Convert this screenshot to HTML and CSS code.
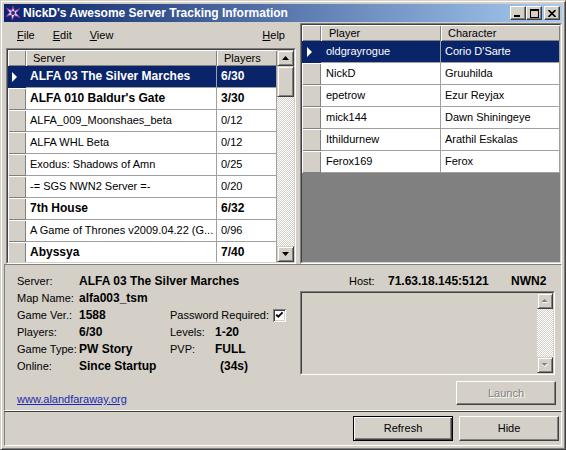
FILE: index.html
```html
<!DOCTYPE html>
<html>
<head>
<meta charset="utf-8">
<title>NickD's Awesome Server Tracking Information</title>
<link rel="stylesheet" href="styles.css">
</head>
<body>
<div class="window">
  <div class="titlebar">
    <svg class="appicon" viewBox="0 0 16 16" width="16" height="16">
      <polygon points="8,1 9.6,5.8 14.8,3.6 11,8 15,12.6 9.4,10.6 7.2,15.2 6.2,10.2 1.2,11.4 4.6,7.6 1.4,3 6.6,5.4" fill="#d8d4ec" stroke="#8a2a9a" stroke-width="1"/>
      <circle cx="8" cy="8" r="2" fill="#3a2a7a"/>
    </svg>
    <span class="title">NickD's Awesome Server Tracking Information</span>
    <div class="capbtns">
      <div class="cap"><svg width="8" height="7" viewBox="0 0 8 7"><rect x="0" y="5" width="6" height="2" fill="#000"/></svg></div>
      <div class="cap"><svg width="9" height="9" viewBox="0 0 9 9"><path d="M0 0H9V9H0Z M1 2V8H8V2Z" fill="#000" fill-rule="evenodd"/></svg></div>
      <div class="cap close"><svg width="8" height="7" viewBox="0 0 8 7"><path d="M0.5 0L7.5 7M7.5 0L0.5 7" stroke="#000" stroke-width="1.6"/></svg></div>
    </div>
  </div>

  <div class="main">
    <div class="leftpane">
      <div class="menubar">
        <span class="menu"><u>F</u>ile</span>
        <span class="menu"><u>E</u>dit</span>
        <span class="menu"><u>V</u>iew</span>
        <span class="menu help"><u>H</u>elp</span>
      </div>
      <div class="sunken lgrid">
        <div class="sunken-in gridbody">
          <div class="rows">
            <div class="row hrow">
              <div class="rh"></div>
              <div class="hcell w-server">Server</div>
              <div class="hcell w-players">Players</div>
            </div>
            <div class="row sel bold">
              <div class="rh"><span class="tri"></span></div>
              <div class="cell w-server">ALFA 03 The Silver Marches</div>
              <div class="cell w-players">6/30</div>
            </div>
            <div class="row bold">
              <div class="rh"></div>
              <div class="cell w-server">ALFA 010 Baldur's Gate</div>
              <div class="cell w-players">3/30</div>
            </div>
            <div class="row">
              <div class="rh"></div>
              <div class="cell w-server">ALFA_009_Moonshaes_beta</div>
              <div class="cell w-players">0/12</div>
            </div>
            <div class="row">
              <div class="rh"></div>
              <div class="cell w-server">ALFA WHL Beta</div>
              <div class="cell w-players">0/12</div>
            </div>
            <div class="row">
              <div class="rh"></div>
              <div class="cell w-server">Exodus: Shadows of Amn</div>
              <div class="cell w-players">0/25</div>
            </div>
            <div class="row">
              <div class="rh"></div>
              <div class="cell w-server">-= SGS NWN2 Server =-</div>
              <div class="cell w-players">0/20</div>
            </div>
            <div class="row bold">
              <div class="rh"></div>
              <div class="cell w-server">7th House</div>
              <div class="cell w-players">6/32</div>
            </div>
            <div class="row">
              <div class="rh"></div>
              <div class="cell w-server">A Game of Thrones v2009.04.22 (G...</div>
              <div class="cell w-players">0/96</div>
            </div>
            <div class="row bold">
              <div class="rh"></div>
              <div class="cell w-server">Abyssya</div>
              <div class="cell w-players">7/40</div>
            </div>
          </div>
          <div class="vscroll">
            <div class="sbtn"><svg width="7" height="4" viewBox="0 0 7 4"><path d="M3.5 0L7 4H0Z" fill="#000"/></svg></div>
            <div class="sthumb"></div>
            <div class="strack"></div>
            <div class="sbtn"><svg width="7" height="4" viewBox="0 0 7 4"><path d="M0 0H7L3.5 4Z" fill="#000"/></svg></div>
          </div>
        </div>
      </div>
    </div>

    <div class="rightpane">
      <div class="sunken rgrid">
        <div class="sunken-in rgridbody">
          <div class="row hrow">
            <div class="rh rh-r"></div>
            <div class="hcell w-player">Player</div>
            <div class="hcell w-char">Character</div>
          </div>
          <div class="row sel">
            <div class="rh rh-r"><span class="tri"></span></div>
            <div class="cell w-player">oldgrayrogue</div>
            <div class="cell w-char">Corio D'Sarte</div>
          </div>
          <div class="row">
            <div class="rh rh-r"></div>
            <div class="cell w-player">NickD</div>
            <div class="cell w-char">Gruuhilda</div>
          </div>
          <div class="row">
            <div class="rh rh-r"></div>
            <div class="cell w-player">epetrow</div>
            <div class="cell w-char">Ezur Reyjax</div>
          </div>
          <div class="row">
            <div class="rh rh-r"></div>
            <div class="cell w-player">mick144</div>
            <div class="cell w-char">Dawn Shiningeye</div>
          </div>
          <div class="row">
            <div class="rh rh-r"></div>
            <div class="cell w-player">Ithildurnew</div>
            <div class="cell w-char">Arathil Eskalas</div>
          </div>
          <div class="row">
            <div class="rh rh-r"></div>
            <div class="cell w-player">Ferox169</div>
            <div class="cell w-char">Ferox</div>
          </div>
        </div>
      </div>
    </div>
  </div>

  <div class="info">
    <div class="info-left">
      <div class="fields">
        <span>Server:</span><b class="span3">ALFA 03 The Silver Marches</b>
        <span>Map Name:</span><b class="span3">alfa003_tsm</b>
        <span>Game Ver.:</span><b>1588</b>
        <span class="pw span2"><span class="pwlabel">Password Required:</span>
          <svg class="check" width="13" height="13" viewBox="0 0 13 13">
            <rect width="13" height="13" fill="#fff"/>
            <path d="M0 0H13V1H1V13H0Z" fill="#808080"/>
            <path d="M1 1H12V2H2V12H1Z" fill="#404040"/>
            <path d="M11 2H12V12H2V11H11Z" fill="#d4d0c8"/>
            <rect x="2" y="2" width="9" height="9" fill="#fff"/>
            <path d="M3.2 5.6L5.3 7.7L9.6 3.4" stroke="#000" stroke-width="1.8" fill="none"/>
          </svg>
        </span>
        <span>Players:</span><b>6/30</b><span>Levels:</span><b>1-20</b>
        <span>Game Type:</span><b>PW Story</b><span>PVP:</span><b>FULL</b>
        <span>Online:</span><b>Since Startup</b><span></span><b class="secs">(34s)</b>
      </div>
      <a class="link" href="#">www.alandfaraway.org</a>
    </div>
    <div class="info-right">
      <div class="hostrow">
        <span class="hostlabel">Host:</span>
        <b class="hostval">71.63.18.145:5121</b>
        <b>NWN2</b>
      </div>
      <div class="tbox">
        <div class="tbox-in">
          <div class="vscroll small">
            <div class="sbtn"><svg width="8" height="5" viewBox="0 0 8 5"><path d="M4 1L7 4H1Z" fill="#fff"/><path d="M3.5 0L6.5 3H0.5Z" fill="#808080"/></svg></div>
            <div class="strack"></div>
            <div class="sbtn"><svg width="8" height="5" viewBox="0 0 8 5"><path d="M1 1H7L4 4Z" fill="#fff"/><path d="M0.5 0H6.5L3.5 3Z" fill="#808080"/></svg></div>
          </div>
        </div>
      </div>
      <div class="btn launch disabled">Launch</div>
    </div>
  </div>

  <div class="buttonbar">
    <div class="btn default">Refresh</div>
    <div class="btn">Hide</div>
  </div>
</div>
</body>
</html>
```

FILE: styles.css
```css
* { box-sizing: border-box; }
html, body { margin: 0; padding: 0; }
body {
  width: 566px;
  height: 450px;
  overflow: hidden;
  background: #d4d0c8;
  font-family: "Liberation Sans", Arial, sans-serif;
  font-size: 11px;
  line-height: 13px;
  color: #000;
}
b { font-weight: bold; font-size: 12px; }

.window {
  width: 566px;
  height: 450px;
  border: 1px solid;
  border-color: #d4d0c8 #404040 #404040 #d4d0c8;
  box-shadow: inset 1px 1px #fff, inset -1px -1px #808080;
  padding: 3px;
  display: flex;
  flex-direction: column;
  background: #d4d0c8;
}

/* title bar */
.titlebar {
  height: 18px;
  flex: none;
  display: flex;
  align-items: center;
  padding: 0 2px 0 1px;
  background: linear-gradient(to right, #0a246a, #a6caf0);
}
.appicon { flex: none; display: block; }
.title {
  flex: 1;
  margin-left: 2px;
  color: #fff;
  font-weight: bold;
  font-size: 12px;
  white-space: nowrap;
}
.capbtns { display: flex; }
.cap {
  width: 16px;
  height: 14px;
  background: #d4d0c8;
  border: 1px solid;
  border-color: #fff #404040 #404040 #fff;
  box-shadow: inset -1px -1px #808080;
  display: flex;
  align-items: center;
  justify-content: center;
}
.cap svg { display: block; }
.cap.close { margin-left: 2px; }

/* main area */
.main {
  margin-top: 1px;
  height: 241px;
  flex: none;
  display: flex;
}
.leftpane {
  width: 296px;
  display: flex;
  flex-direction: column;
}
.menubar {
  height: 25px;
  display: flex;
  align-items: center;
  padding: 0 6px 0 4px;
}
.menu { padding: 0 9px; }
.menu.help { margin-left: auto; }

.sunken {
  border: 1px solid;
  border-color: #808080 #fff #fff #808080;
}
.sunken-in {
  height: 100%;
  border: 1px solid;
  border-color: #404040 #d4d0c8 #d4d0c8 #404040;
}
.lgrid {
  margin: 0 4px 0 2px;
  height: 216px;
}
.gridbody {
  display: flex;
  background: #808080;
  overflow: hidden;
}
.rows {
  flex: 1;
  overflow: hidden;
}
.row {
  display: flex;
  height: 22px;
}
.row.hrow { height: 16px; }
.rh {
  width: 18px;
  flex: none;
  background: #d4d0c8;
  box-shadow: inset 1px 1px #fff, inset -1px -1px #808080;
  display: flex;
  align-items: center;
  padding-left: 4px;
}
.rh-r { width: 19px; padding-left: 5px; }
.hcell {
  flex: none;
  background: #d4d0c8;
  box-shadow: inset 1px 1px #fff, inset -1px -1px #808080;
  padding-left: 7px;
  display: flex;
  align-items: center;
  white-space: nowrap;
  overflow: hidden;
}
.cell {
  flex: none;
  background: #fff;
  border-right: 1px solid #a0a0a0;
  border-bottom: 1px solid #a0a0a0;
  padding-left: 4px;
  display: flex;
  align-items: center;
  white-space: nowrap;
  overflow: hidden;
}
.row.bold .cell { font-weight: bold; font-size: 12px; }
.row.sel .cell { background: #0a246a; color: #fff; }
.row.sel .rh { background: #0a246a; box-shadow: none; }
.tri {
  width: 0;
  height: 0;
  border-left: 5px solid #fff;
  border-top: 5px solid transparent;
  border-bottom: 5px solid transparent;
}
.w-server { width: 191px; }
.w-players { width: 60px; }
.w-player { width: 120px; padding-left: 5px; }
.hcell.w-player { padding-left: 8px; }
.w-char { width: 119px; }

/* scrollbars */
.vscroll {
  width: 17px;
  flex: none;
  display: flex;
  flex-direction: column;
}
.sbtn, .sthumb {
  flex: none;
  height: 16px;
  background: #d4d0c8;
  border: 1px solid;
  border-color: #d4d0c8 #404040 #404040 #d4d0c8;
  box-shadow: inset 1px 1px #fff, inset -1px -1px #808080;
  display: flex;
  align-items: center;
  justify-content: center;
}
.sbtn svg { display: block; }
.sthumb { height: 31px; }
.strack {
  flex: 1;
  background: repeating-conic-gradient(#d4d0c8 0 25%, #fff 0 50%) 0 0 / 2px 2px;
}
.vscroll.small { width: 16px; }

.rightpane { width: 262px; }
.rgrid { height: 241px; }
.rgridbody { background: #808080; overflow: hidden; }

/* info panel */
.info {
  height: 147px;
  flex: none;
  display: flex;
  border: 1px solid;
  border-color: #808080 #fff #fff #808080;
}
.info-left {
  width: 291px;
  padding: 8px 0 0 12px;
  display: flex;
  flex-direction: column;
  align-items: flex-start;
}
.fields {
  display: grid;
  grid-template-columns: 62px 91px 45px auto;
  grid-auto-rows: 17px;
  align-items: center;
  white-space: nowrap;
}
.span3 { grid-column: span 3; }
.span2 { grid-column: span 2; }
.pw { display: flex; align-items: center; }
.pwlabel { width: 103px; }
.check { display: block; }
.secs { padding-left: 5px; }
.link {
  margin-top: 18px;
  color: #1a2ab0;
  text-decoration: underline;
}

.info-right {
  width: 256px;
  margin-left: 4px;
  padding-top: 8px;
  display: flex;
  flex-direction: column;
  align-items: flex-start;
}
.hostrow {
  height: 17px;
  display: flex;
  align-items: center;
  padding-left: 49px;
  white-space: nowrap;
}
.hostlabel { width: 39px; }
.hostval { width: 123px; }
.tbox {
  margin-top: 1px;
  width: 255px;
  height: 84px;
  border: 1px solid;
  border-color: #808080 #fff #fff #808080;
}
.tbox-in {
  height: 100%;
  border: 1px solid;
  border-color: #404040 #d4d0c8 #d4d0c8 #404040;
  display: flex;
  justify-content: flex-end;
}

/* buttons */
.btn {
  width: 100px;
  height: 25px;
  background: #d4d0c8;
  border: 1px solid;
  border-color: #fff #404040 #404040 #fff;
  box-shadow: inset -1px -1px #808080;
  display: flex;
  align-items: center;
  justify-content: center;
  font-size: 11px;
}
.btn.default {
  border: 1px solid #000;
  box-shadow: inset 1px 1px #fff, inset -1px -1px #404040, inset -2px -2px #808080;
}
.btn.disabled {
  color: #808080;
  text-shadow: 1px 1px #fff;
}
.launch {
  margin-top: 6px;
  height: 24px;
  align-self: flex-end;
}

.buttonbar {
  height: 35px;
  flex: none;
  display: flex;
  justify-content: flex-end;
  gap: 6px;
  padding: 4px 2px 0 0;
  border: 1px solid;
  border-color: #404040 #fff #fff #808080;
}
```
